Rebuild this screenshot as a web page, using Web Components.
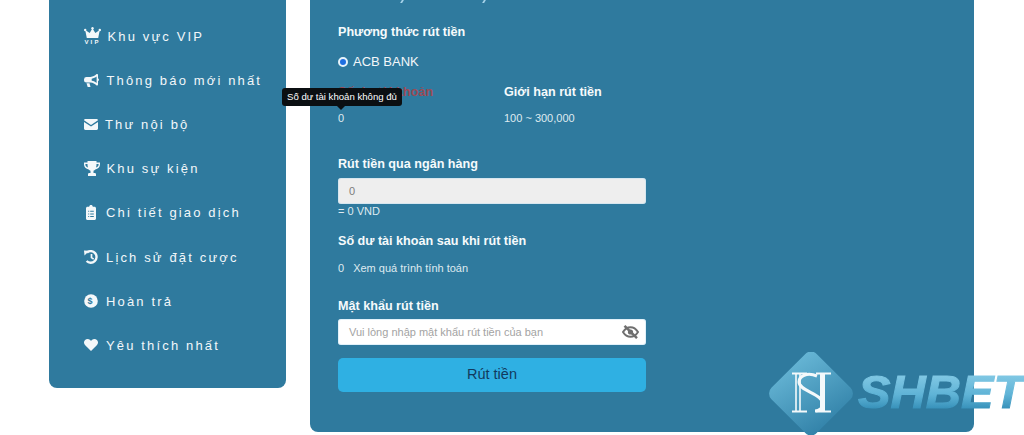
<!DOCTYPE html>
<html lang="vi"><head><meta charset="utf-8"><title>Rút tiền</title>
<style>
html,body{margin:0;padding:0;background:#fff;height:435px;overflow:hidden;font-family:"Liberation Sans",Arial,sans-serif}
</style></head><body>
<x-page>
  <x-sidebar>
    <x-nav-item icon="crown" offset="23.5">Khu vực VIP</x-nav-item>
    <x-nav-item icon="bullhorn" offset="22.5">Thông báo mới nhất</x-nav-item>
    <x-nav-item icon="mail" offset="21">Thư nội bộ</x-nav-item>
    <x-nav-item icon="trophy" offset="22.5">Khu sự kiện</x-nav-item>
    <x-nav-item icon="clipboard" offset="22">Chi tiết giao dịch</x-nav-item>
    <x-nav-item icon="history" offset="22">Lịch sử đặt cược</x-nav-item>
    <x-nav-item icon="coin" offset="22">Hoàn trả</x-nav-item>
    <x-nav-item icon="heart" offset="22">Yêu thích nhất</x-nav-item>
  </x-sidebar>
  <x-withdraw></x-withdraw>
</x-page>
<x-logo></x-logo>
<template id="t-page"><style>
:host{display:flex;align-items:flex-start;gap:24px;padding-left:49px;width:975px;box-sizing:border-box}
</style><slot></slot></template>
<template id="t-sidebar"><style>
:host{display:block;width:237px;box-sizing:border-box;background:#2f7a9e;border-radius:0 0 8px 8px;padding:14px 0 20px 35px;color:#f2f7fa}
</style><slot></slot></template>
<template id="t-nav"><style>
:host{display:flex;align-items:center;height:44.2px;font-size:13px;letter-spacing:2.15px;white-space:nowrap}
.i{flex:none;display:flex;align-items:center}
svg{display:block;fill:#f4f8fa}
</style><span class="i"></span><slot></slot></template>
<template id="t-heading"><style>
:host{display:block;font-size:12.6px;line-height:16px;font-weight:700;color:#f6fafc}
</style><slot></slot></template>
<template id="t-note"><style>
:host{display:block;font-size:11px;line-height:14px;color:#dfeaf0}
</style><slot></slot></template>
<template id="t-tip"><style>
:host{position:absolute;left:-56px;top:4px;z-index:2;background:#0b0f12;color:#fff;font-size:9.6px;line-height:18px;height:18px;width:120px;box-sizing:border-box;padding-left:5px;border-radius:3px;white-space:nowrap;font-weight:400}
:host::after{content:"";position:absolute;left:55px;top:18px;border:4px solid transparent;border-top-color:#0b0f12;border-bottom:0}
</style><slot></slot></template>
<template id="t-input"><style>
:host{display:flex;align-items:center;justify-content:space-between;height:26px;box-sizing:border-box;border-radius:3px;padding:0 7px 0 11px;font-size:11px;background:#fff;color:#a3a3a3;box-shadow:0 0 0 1px rgba(170,215,240,.35) inset}
:host([disabled]){background:#eee;color:#7d7d7d}
</style><slot></slot></template>
<template id="t-withdraw"><style>
:host{display:block;width:664px;box-sizing:border-box;background:#2f7a9e;border-radius:0 0 8px 8px;padding:0 328px 40px 28px;color:#f2f7fa;position:relative}
.marks{display:flex;height:3px;padding-left:63px;gap:80px}
.marks i{display:block;width:2px;height:3px;background:#a6d3ea;transform:skewX(-30deg)}
.m1{margin-top:21px}.radio{display:flex;align-items:center;gap:5px;font-size:13px;line-height:16px;margin-top:14px}
.dot{width:10px;height:10px;box-sizing:border-box;border-radius:50%;background:#1f6fe0;border:2px solid #e6f3fb}
.cols{display:flex;margin-top:14px}.cols>div{position:relative}.c1{width:166px}
.red{color:#9c4a55}
.val{margin-top:11px}
.amt{margin-top:31px}.in1{margin-top:6px}
.after{margin-top:15px}.calc{margin-top:12px;display:flex;gap:9px}
.pw{margin-top:23px}.in2{margin-top:5px}
button{display:block;width:100%;height:34px;margin-top:13px;border:0;border-radius:5px;background:#2fb0e3;color:#123a5e;font:14.500px "Liberation Sans",Arial,sans-serif;padding:0 0 2px}
svg{display:block}
</style>
<div class="marks"><i></i><i></i></div>
<x-heading class="m1">Phương thức rút tiền</x-heading>
<div class="radio"><span class="dot"></span>ACB BANK</div>
<div class="cols">
  <div class="c1"><x-heading class="red">Số dư tài khoản</x-heading><x-tip>Số dư tài khoản không đủ</x-tip><x-note class="val">0</x-note></div>
  <div><x-heading>Giới hạn rút tiền</x-heading><x-note class="val">100 ~ 300,000</x-note></div>
</div>
<x-heading class="amt">Rút tiền qua ngân hàng</x-heading>
<x-input class="in1" disabled>0</x-input>
<x-note>= 0 VND</x-note>
<x-heading class="after">Số dư tài khoản sau khi rút tiền</x-heading>
<x-note class="calc"><span>0</span><span>Xem quá trình tính toán</span></x-note>
<x-heading class="pw">Mật khẩu rút tiền</x-heading>
<x-input class="in2"><span>Vui lòng nhập mật khẩu rút tiền của bạn</span>
<svg width="17" height="14" viewBox="0 0 17 14"><path d="M1 7C3 3.800 5.500 2.200 8.500 2.200S14 3.800 16 7c-2 3.200-4.500 4.800-7.500 4.800S3 10.200 1 7z" fill="none" stroke="#6f6f6f" stroke-width="2"/><circle cx="8.500" cy="7" r="2.600" fill="#6f6f6f"/><path d="M2.500 .8l12.500 12.400" stroke="#6f6f6f" stroke-width="2.400"/></svg></x-input>
<button type="button">Rút tiền</button>
</template>
<template id="t-logo"><style>
:host{position:absolute;left:769px;top:352px;width:255px;height:83px;overflow:hidden;display:flex;align-items:center}
svg{flex:none;display:block}
.t{position:absolute;left:89px;top:12px;font:italic 700 46px/56px "Liberation Sans",Arial,sans-serif;white-space:nowrap;transform-origin:0 50%;transform:scaleX(1.060);-webkit-text-stroke:1px transparent;background:linear-gradient(180deg,#86cbe6 15%,#5fb3d6 55%,#2f8ab4 85%);-webkit-background-clip:text;background-clip:text;color:transparent;padding-right:4px}
</style>
<svg width="84" height="83" viewBox="0 0 84 83"><defs><linearGradient id="g" gradientUnits="userSpaceOnUse" x1="0" y1="30" x2="84" y2="50"><stop offset="0" stop-color="#6ab9d8"/><stop offset="1" stop-color="#2f7fa6"/></linearGradient></defs>
<rect x="10" y="9.500" width="64" height="64" rx="8" transform="rotate(45 42 41.500)" fill="url(#g)"/>
<g fill="none" stroke="#f4f9fb"><path d="M23 21.500h15M23 59.500h15M47 21.500h15M47 59.500h15" stroke-width="2"/><path d="M27 21v39M31 21v39" stroke-width="1.600"/><path d="M53.500 21v39" stroke-width="5"/><path d="M48 24C38 20 30 24 30 30c0 9 24 12 24 22 0 4-4 7-8 7" stroke-width="3"/></g></svg>
<span class="t">SHBET</span>
</template>
<script>
const ICONS={
crown:[16,'<svg width="17" height="18" viewBox="0 0 17 18"><circle cx="8.500" cy="1.200" r="1.200"/><circle cx="1.200" cy="3" r="1.200"/><circle cx="15.800" cy="3" r="1.200"/><path d="M8.500 1.200L11.300 6l4.500-3-1.600 8H2.800L1.200 3l4.500 3z"/><text x="8.500" y="17.300" text-anchor="middle" font-family="Liberation Sans" font-size="6" font-weight="700" fill="#f4f8fa">VIP</text></svg>'],
bullhorn:[15,'<svg width="15" height="13" viewBox="0 0 15 13"><path d="M13 0c.6 0 1 .4 1 1v3.200c.6.300 1 .9 1 1.500s-.4 1.200-1 1.500V10.500c0 .6-.4 1-1 1-.3 0-.5-.1-.7-.3C11 9.800 9 8.800 6.500 8.500H2.500A2.500 2.500 0 0 1 0 6V5.400A2.500 2.500 0 0 1 2.500 3h4c2.500-.3 4.500-1.400 5.800-2.700.2-.2.400-.3.700-.3zM12.600 2.600C11.400 3.500 9.700 4.400 7.700 4.700v2c2 .3 3.700 1.200 4.900 2.200z" fill-rule="evenodd"/><path d="M2.500 9.200h3l1 3.800H3.700z"/></svg>'],
mail:[14,'<svg width="14" height="11" viewBox="0 0 14 11"><path d="M1.400 0h11.200c.8 0 1.400.6 1.400 1.300L7 5.900 0 1.300C0 .6.600 0 1.400 0z"/><path d="M0 2.900l7 4.600 7-4.600v6.700c0 .8-.6 1.400-1.400 1.400H1.400C.6 11 0 10.400 0 9.600z"/></svg>'],
trophy:[16,'<svg width="16" height="15" viewBox="0 0 16 15"><path d="M3.500 0h9v1.500H16v2c0 2.600-2 4.500-4.700 4.900-.5.600-1.100 1.100-1.800 1.400v2.200h1.300c.7 0 1.200.6 1.200 1.300v1.700H4v-1.700c0-.7.500-1.300 1.200-1.300h1.300V9.800c-.7-.3-1.300-.8-1.800-1.400C2 8 0 6.100 0 3.500v-2h3.500zM1.400 2.900v.6c0 1.300.8 2.400 2.600 3-.4-1-.5-2.400-.5-3.600zM14.600 2.900h-2.100c0 1.200-.1 2.600-.5 3.600 1.800-.6 2.600-1.700 2.600-3z" fill-rule="evenodd"/></svg>'],
clipboard:[12,'<svg style="margin-left:2px" width="10" height="15" viewBox="0 0 10 15"><path d="M3.200 1.700C3.300.7 4 0 5 0s1.700.7 1.800 1.700h1.700c.8 0 1.500.7 1.500 1.500v10.300c0 .8-.7 1.500-1.500 1.500h-7C.7 15 0 14.300 0 13.500V3.200c0-.8.700-1.500 1.500-1.500zM2.200 5.800v1h1v-1zm0 2.600v1h1v-1zm0 2.600v1h1v-1zM4.200 5.800v1h3.600v-1zm0 2.600v1h3.600v-1zm0 2.600v1h3.600v-1z" fill-rule="evenodd"/></svg>'],
history:[14,'<svg width="14" height="14" viewBox="0 0 14 14"><path d="M3 2.500A5.800 5.800 0 1 1 2.600 11" fill="none" stroke="#f4f8fa" stroke-width="2.400"/><path d="M0 .6l5.200.2L.5 5.600z"/><path d="M7.500 4v3.600l2.200 1.500" fill="none" stroke="#f4f8fa" stroke-width="1.700"/></svg>'],
coin:[14,'<svg width="14" height="14" viewBox="0 0 14 14"><circle cx="7" cy="7" r="6.800"/><text x="7" y="10.200" text-anchor="middle" font-family="Liberation Sans" font-size="9" font-weight="700" fill="#2f7a9e">$</text></svg>'],
heart:[14,'<svg width="14" height="12" viewBox="0 0 14 12"><path d="M7 12L1.200 6.300C-.4 4.700-.4 2.200 1.100.9 2.600-.4 4.800-.2 6.200 1.100L7 1.900l.8-.8C9.200-.2 11.400-.4 12.900.9c1.500 1.300 1.500 3.800-.1 5.400z"/></svg>']
};
function def(name,tpl,init){
 customElements.define(name,class extends HTMLElement{
  constructor(){super();const r=this.attachShadow({mode:'open'});r.appendChild(document.getElementById(tpl).content.cloneNode(true));}
  connectedCallback(){if(init)init(this);}
 });
}
def('x-page','t-page');
def('x-sidebar','t-sidebar');
def('x-nav-item','t-nav',el=>{
 const ic=ICONS[el.getAttribute('icon')];const s=el.shadowRoot.querySelector('.i');
 s.innerHTML=ic[1];s.style.width=el.getAttribute('offset')+'px';
});
def('x-heading','t-heading');
def('x-note','t-note');
def('x-tip','t-tip');
def('x-input','t-input');
def('x-withdraw','t-withdraw');
def('x-logo','t-logo');
</script>
</body></html>
